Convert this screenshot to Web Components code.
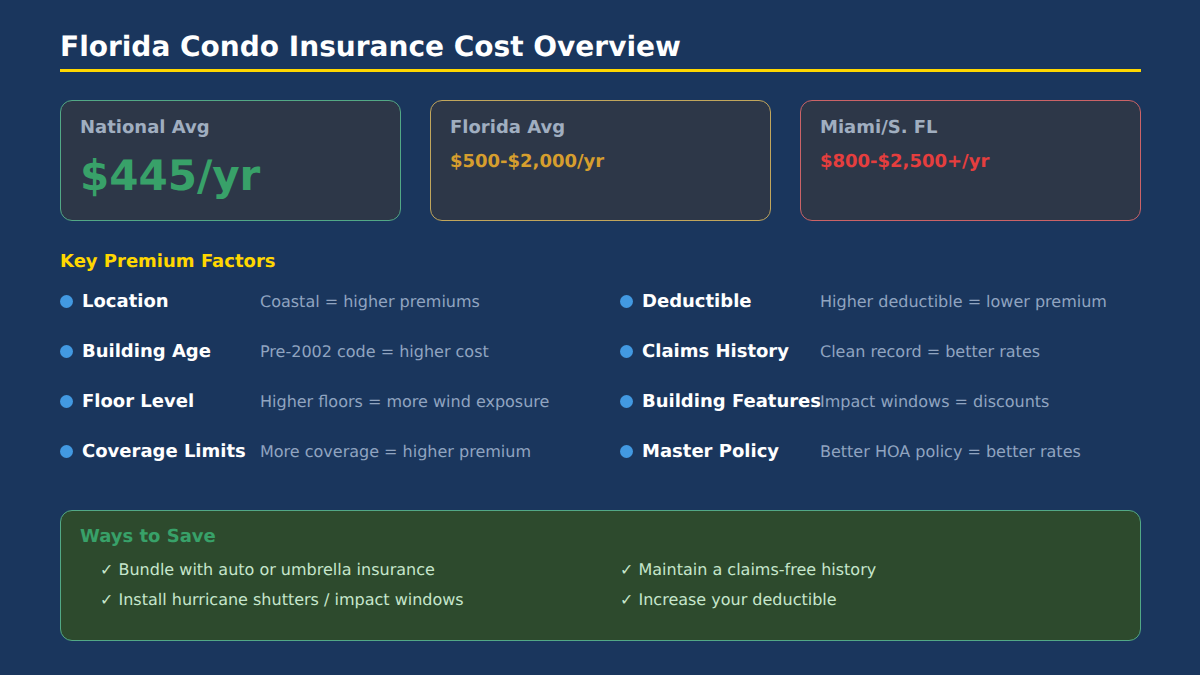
<!DOCTYPE html>
<html lang="en">
<head>
<meta charset="utf-8">
<title>Florida Condo Insurance Cost Overview</title>
<style>
	html, body { margin: 0; padding: 0; }
	body {
		width: 1200px;
		height: 675px;
		overflow: hidden;
		background: #1a365d;
		font-family: "DejaVu Sans", sans-serif;
		text-rendering: geometricPrecision;
	}
</style>
</head>
<body>
<cost-slide>
	<slide-header slot="header">Florida Condo Insurance Cost Overview</slide-header>
	<stat-card slot="stats" label="National Avg" value="$445/yr" color="#38a169" big></stat-card>
	<stat-card slot="stats" label="Florida Avg" value="$500-$2,000/yr" color="#d69e2e"></stat-card>
	<stat-card slot="stats" label="Miami/S. FL" value="$800-$2,500+/yr" color="#e53e3e"></stat-card>
	<factor-row slot="factors" name="Location" note="Coastal = higher premiums"></factor-row>
	<factor-row slot="factors" name="Deductible" note="Higher deductible = lower premium"></factor-row>
	<factor-row slot="factors" name="Building Age" note="Pre-2002 code = higher cost"></factor-row>
	<factor-row slot="factors" name="Claims History" note="Clean record = better rates"></factor-row>
	<factor-row slot="factors" name="Floor Level" note="Higher floors = more wind exposure"></factor-row>
	<factor-row slot="factors" name="Building Features" note="Impact windows = discounts"></factor-row>
	<factor-row slot="factors" name="Coverage Limits" note="More coverage = higher premium"></factor-row>
	<factor-row slot="factors" name="Master Policy" note="Better HOA policy = better rates"></factor-row>
	<save-panel slot="savings" heading="Ways to Save">
		<save-item>Bundle with auto or umbrella insurance</save-item>
		<save-item>Maintain a claims-free history</save-item>
		<save-item>Install hurricane shutters / impact windows</save-item>
		<save-item>Increase your deductible</save-item>
	</save-panel>
</cost-slide>

<script>
	/**
	 * Dummy HTML tag function for syntax highlighters.
	 * @returns {string} The original raw string.
	 */
	const html = x => x.raw[0];

	const slideTemplate = document.createElement("template");
	slideTemplate.innerHTML = html`
		<style>
			:host {
				display: block;
				box-sizing: border-box;
				width: 1200px;
				height: 675px;
				padding: 30px 59px 0 60px;
			}
			.stats {
				display: grid;
				grid-template-columns: repeat(3, 341px);
				gap: 29px;
				margin-top: 28px;
			}
			h2 {
				margin: 31px 0 0;
				height: 20px;
				font-size: 18px;
				line-height: 20px;
				font-weight: bold;
				color: #ffd700;
			}
			.factors {
				display: grid;
				grid-template-columns: 520px 520px;
				column-gap: 40px;
				margin-top: 4px;
			}
			.savings { margin-top: 34px; }
		</style>
		<slot name="header"></slot>
		<div class="stats"><slot name="stats"></slot></div>
		<h2>Key Premium Factors</h2>
		<div class="factors"><slot name="factors"></slot></div>
		<div class="savings"><slot name="savings"></slot></div>
	`;

	class CostSlide extends HTMLElement {
		constructor() {
			super();
			this.attachShadow({mode: "open"}).appendChild(slideTemplate.content.cloneNode(true));
		}
	}

	const headerTemplate = document.createElement("template");
	headerTemplate.innerHTML = html`
		<style>
			:host {
				display: block;
				height: 39px;
				border-bottom: 3px solid #ffd700;
				font-size: 28px;
				line-height: 34px;
				font-weight: bold;
				color: #fff;
			}
		</style>
		<slot></slot>
	`;

	class SlideHeader extends HTMLElement {
		constructor() {
			super();
			this.attachShadow({mode: "open"}).appendChild(headerTemplate.content.cloneNode(true));
		}
	}

	const cardTemplate = document.createElement("template");
	cardTemplate.innerHTML = html`
		<style>
			:host {
				display: block;
				box-sizing: border-box;
				height: 121px;
				padding: 17px 19px 13px;
				background: #2d3748;
				border: 1px solid color-mix(in srgb, var(--accent) 70%, #8fb8c8);
				border-radius: 12px;
			}
			.label {
				font-size: 18px;
				line-height: 20px;
				font-weight: bold;
				color: #a0aec0;
			}
			.value {
				margin-top: 4px;
				font-size: 18px;
				line-height: 40px;
				font-weight: bold;
				color: var(--accent);
			}
			:host([big]) .value {
				margin-top: 13px;
				font-size: 42px;
				line-height: 50px;
			}
		</style>
		<div class="label"></div>
		<div class="value"></div>
	`;

	class StatCard extends HTMLElement {
		constructor() {
			super();
			const shadow = this.attachShadow({mode: "open"});
			shadow.appendChild(cardTemplate.content.cloneNode(true));
			this.style.setProperty("--accent", this.getAttribute("color"));
			shadow.querySelector(".label").textContent = this.getAttribute("label");
			shadow.querySelector(".value").textContent = this.getAttribute("value");
		}
	}

	const rowTemplate = document.createElement("template");
	rowTemplate.innerHTML = html`
		<style>
			:host {
				display: flex;
				align-items: center;
				height: 50px;
			}
			.dot {
				flex: none;
				width: 13px;
				height: 13px;
				margin-right: 9px;
				border-radius: 50%;
				background: #4299e1;
			}
			.name {
				flex: none;
				width: 178px;
				font-size: 18px;
				font-weight: bold;
				white-space: nowrap;
				color: #fff;
			}
			.note {
				font-size: 16px;
				white-space: nowrap;
				color: #90a4c0;
			}
		</style>
		<span class="dot"></span>
		<span class="name"></span>
		<span class="note"></span>
	`;

	class FactorRow extends HTMLElement {
		constructor() {
			super();
			const shadow = this.attachShadow({mode: "open"});
			shadow.appendChild(rowTemplate.content.cloneNode(true));
			shadow.querySelector(".name").textContent = this.getAttribute("name");
			shadow.querySelector(".note").textContent = this.getAttribute("note");
		}
	}

	const panelTemplate = document.createElement("template");
	panelTemplate.innerHTML = html`
		<style>
			:host {
				display: block;
				box-sizing: border-box;
				height: 131px;
				padding: 16px 19px 14px;
				background: #2d4a2d;
				border: 1px solid color-mix(in srgb, #38a169 70%, #8fb8c8);
				border-radius: 12px;
			}
			.heading {
				font-size: 18px;
				line-height: 20px;
				font-weight: bold;
				color: #38a169;
			}
			.items {
				display: grid;
				grid-template-columns: 520px 440px;
				margin-top: 8px;
			}
		</style>
		<div class="heading"></div>
		<div class="items"><slot></slot></div>
	`;

	class SavePanel extends HTMLElement {
		constructor() {
			super();
			const shadow = this.attachShadow({mode: "open"});
			shadow.appendChild(panelTemplate.content.cloneNode(true));
			shadow.querySelector(".heading").textContent = this.getAttribute("heading");
		}
	}

	const itemTemplate = document.createElement("template");
	itemTemplate.innerHTML = html`
		<style>
			:host {
				display: block;
				height: 30px;
				padding-left: 20px;
				font-size: 16px;
				line-height: 30px;
				white-space: nowrap;
				color: #c6e6cc;
			}
		</style>
		✓ <slot></slot>
	`;

	class SaveItem extends HTMLElement {
		constructor() {
			super();
			this.attachShadow({mode: "open"}).appendChild(itemTemplate.content.cloneNode(true));
		}
	}

	customElements.define("slide-header", SlideHeader);
	customElements.define("stat-card", StatCard);
	customElements.define("factor-row", FactorRow);
	customElements.define("save-item", SaveItem);
	customElements.define("save-panel", SavePanel);
	customElements.define("cost-slide", CostSlide);
</script>
</body>
</html>
